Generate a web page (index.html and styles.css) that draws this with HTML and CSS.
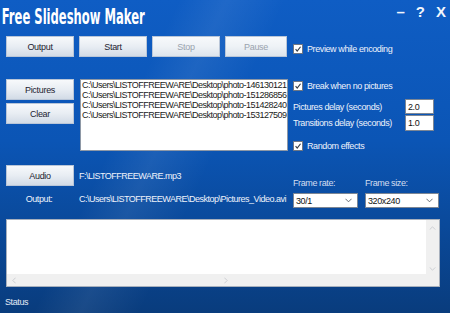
FILE: index.html
```html
<!DOCTYPE html>
<html lang="en">
<head>
    <meta charset="UTF-8">
    <title>Free Slideshow Maker</title>
    <link rel="stylesheet" href="styles.css">
</head>
<body>

    <div class="window">

        <!-- Title bar -->
        <div class="titlebar">
            <div class="app-title">Free Slideshow Maker</div>
            <div class="win-controls">
                <span>&ndash;</span>
                <span>?</span>
                <span>X</span>
            </div>
        </div>

        <div class="main">
            <!-- Encoding buttons -->
            <div class="toolbar">
                <button class="btn">Output</button>
                <button class="btn">Start</button>
                <button class="btn" disabled>Stop</button>
                <button class="btn btn-short" disabled>Pause</button>
            </div>
            <div class="opts-top">
                <label class="check"><span class="box"><svg viewBox="0 0 10 10"><path d="M2 5.2 L4 7.5 L8.2 2.2" /></svg></span>Preview while encoding</label>
            </div>

            <!-- Pictures -->
            <div class="pictures">
                <div class="btn-col">
                    <button class="btn">Pictures</button>
                    <button class="btn">Clear</button>
                </div>
                <div class="listbox">
                    <div>C:\Users\LISTOFFREEWARE\Desktop\photo-146130121</div>
                    <div>C:\Users\LISTOFFREEWARE\Desktop\photo-151286856</div>
                    <div>C:\Users\LISTOFFREEWARE\Desktop\photo-151428240</div>
                    <div>C:\Users\LISTOFFREEWARE\Desktop\photo-153127509</div>
                </div>
            </div>
            <div class="opts-mid">
                <label class="check"><span class="box"><svg viewBox="0 0 10 10"><path d="M2 5.2 L4 7.5 L8.2 2.2" /></svg></span>Break when no pictures</label>
                <div class="delays">
                    <div class="delay-row"><span>Pictures delay (seconds)</span><div class="field">2.0</div></div>
                    <div class="delay-row"><span>Transitions delay (seconds)</span><div class="field">1.0</div></div>
                </div>
                <label class="check"><span class="box"><svg viewBox="0 0 10 10"><path d="M2 5.2 L4 7.5 L8.2 2.2" /></svg></span>Random effects</label>
            </div>

            <!-- Audio / output file -->
            <div class="media">
                <div class="media-row">
                    <button class="btn">Audio</button>
                    <span class="path">F:\LISTOFFREEWARE.mp3</span>
                </div>
                <div class="media-row">
                    <span class="media-label">Output:</span>
                    <span class="path">C:\Users\LISTOFFREEWARE\Desktop\Pictures_Video.avi</span>
                </div>
            </div>
            <div class="frame">
                <div class="frame-col rate">
                    <span class="frame-label">Frame rate:</span>
                    <div class="select">30/1<svg viewBox="0 0 8 5"><path d="M0.5 0.5 L4 4 L7.5 0.5" /></svg></div>
                </div>
                <div class="frame-col size">
                    <span class="frame-label">Frame size:</span>
                    <div class="select">320x240<svg viewBox="0 0 8 5"><path d="M0.5 0.5 L4 4 L7.5 0.5" /></svg></div>
                </div>
            </div>
        </div>

        <!-- Log -->
        <div class="log">
            <div class="log-body">
                <div class="log-text"></div>
                <div class="vscroll">
                    <svg viewBox="0 0 8 5"><path d="M0.5 4.5 L4 1 L7.5 4.5" /></svg>
                    <svg viewBox="0 0 8 5"><path d="M0.5 0.5 L4 4 L7.5 0.5" /></svg>
                </div>
            </div>
            <div class="hscroll">
                <svg viewBox="0 0 5 8"><path d="M4.5 0.5 L1 4 L4.5 7.5" /></svg>
                <svg viewBox="0 0 5 8"><path d="M0.5 0.5 L4 4 L0.5 7.5" /></svg>
                <span class="corner"></span>
            </div>
        </div>

        <div class="status">Status</div>
    </div>

</body>
</html>
```

FILE: styles.css
```css
/* Base */
body {
    margin: 0;
    padding: 0;
    font-family: "Liberation Sans", Arial, sans-serif;
    font-size: 9px;
    letter-spacing: -0.4px;
    color: #eef3fb;
}

.window {
    width: 450px;
    height: 313px;
    overflow: hidden;
    box-sizing: border-box;
    background:
        linear-gradient(115deg, rgba(255, 255, 255, 0) 0%, rgba(255, 255, 255, 0) 30%, rgba(255, 255, 255, 0.07) 38%, rgba(255, 255, 255, 0) 48%),
        linear-gradient(180deg, #0f5dc4 0%, #0b55b5 45%, #0a4a9c 70%, #093c7d 100%);
}

/* Title bar */
.titlebar {
    height: 36px;
    display: flex;
    justify-content: space-between;
    align-items: flex-start;
}

.app-title {
    font-family: "DejaVu Sans Condensed", "Liberation Sans", sans-serif;
    font-weight: bold;
    font-size: 22px;
    letter-spacing: 0;
    color: #ffffff;
    padding: 4px 0 0 3px;
    transform: scaleX(0.585);
    transform-origin: left center;
    white-space: nowrap;
}

.win-controls {
    display: flex;
    gap: 11px;
    padding: 3px 4px 0 0;
    font-family: "Liberation Sans", sans-serif;
    font-weight: bold;
    font-size: 15px;
    letter-spacing: 0;
    color: #f2f6fc;
}

/* Main grid */
.main {
    display: grid;
    grid-template-columns: 282px 147px;
    column-gap: 5px;
    padding-left: 6px;
}

.main > .pictures,
.main > .opts-mid {
    margin-top: 22px;
}

.main > .media,
.main > .frame {
    margin-top: 13px;
}

/* Buttons */
.btn {
    box-sizing: border-box;
    width: 68px;
    height: 21px;
    padding: 0;
    border: 1px solid #b9c6d8;
    background: linear-gradient(180deg, #f7f9fb 0%, #e8edf3 50%, #d2dbe6 100%);
    font-family: inherit;
    font-size: 9px;
    letter-spacing: -0.3px;
    color: #1c2230;
    cursor: pointer;
}

.btn:disabled {
    color: #9aa3ae;
    background: linear-gradient(180deg, #f7f9fb 0%, #eef2f6 50%, #dde4ec 100%);
}

.btn-short {
    width: 62px;
}

.toolbar {
    display: flex;
    gap: 5px;
    height: 21px;
}

/* Checkboxes */
.check {
    display: flex;
    align-items: center;
    gap: 4px;
    height: 12px;
}

.box {
    box-sizing: border-box;
    width: 10px;
    height: 10px;
    background: #ffffff;
    border: 1px solid #6d7684;
    display: flex;
}

.box svg {
    width: 8px;
    height: 8px;
    fill: none;
    stroke: #333a44;
    stroke-width: 1.4;
}

.opts-top {
    padding-top: 7px;
}

/* Pictures list */
.pictures {
    display: flex;
    gap: 6px;
}

.btn-col {
    display: flex;
    flex-direction: column;
    gap: 3px;
}

.listbox {
    box-sizing: border-box;
    width: 208px;
    height: 72px;
    background: #ffffff;
    border: 1px solid #8e98a6;
    color: #1a1a1a;
    padding: 0 0 0 1px;
    line-height: 10px;
    letter-spacing: -0.5px;
    white-space: nowrap;
    overflow: hidden;
}

.opts-mid {
    display: flex;
    flex-direction: column;
    padding-top: 1px;
}

.delays {
    display: flex;
    flex-direction: column;
    gap: 1px;
    margin: 7px 0 9px 0;
}

.delay-row {
    display: flex;
    justify-content: space-between;
    align-items: center;
    padding-right: 6px;
}

.delay-row:last-child .field {
    height: 16px;
}

.field {
    box-sizing: border-box;
    width: 29px;
    height: 15px;
    background: #ffffff;
    border: 1px solid #7c8694;
    color: #111111;
    padding: 1px 0 0 2px;
    line-height: 12px;
}

/* Audio & output */
.media {
    display: flex;
    flex-direction: column;
    gap: 8px;
    overflow: hidden;
}

.media-row {
    display: flex;
    align-items: center;
    gap: 5px;
}

.media-label {
    flex-shrink: 0;
    width: 68px;
    text-align: center;
    padding-right: 2px;
    box-sizing: border-box;
}

.path {
    white-space: nowrap;
    letter-spacing: -0.5px;
}

/* Frame options */
.frame {
    display: flex;
    gap: 7px;
}

.frame-col {
    display: flex;
    flex-direction: column;
    padding-top: 12px;
    gap: 4px;
}

.frame-label {
    color: #d4def0;
    line-height: 12px;
}

.rate .select {
    width: 65px;
}

.size .select {
    width: 74px;
}

.select {
    box-sizing: border-box;
    height: 15px;
    background: #ffffff;
    border: 1px solid #7c8694;
    color: #111111;
    display: flex;
    justify-content: space-between;
    align-items: center;
    padding: 0 5px 0 2px;
}

.select svg {
    width: 7px;
    height: 5px;
    fill: none;
    stroke: #555c66;
    stroke-width: 1;
}

/* Log */
.log {
    box-sizing: border-box;
    width: 434px;
    height: 68px;
    margin: 11px 0 0 6px;
    border: 1px solid #a7b0bd;
    background: #f0f0f0;
    display: flex;
    flex-direction: column;
}

.log-body {
    flex: 1;
    display: flex;
}

.log-text {
    flex: 1;
    background: #ffffff;
}

.vscroll {
    width: 13px;
    display: flex;
    flex-direction: column;
    justify-content: space-between;
    align-items: center;
    padding: 6px 0 3px 0;
}

.vscroll svg,
.hscroll svg {
    fill: none;
    stroke: #c4c7cc;
    stroke-width: 1;
}

.vscroll svg {
    width: 7px;
    height: 4px;
}

.hscroll {
    height: 12px;
    display: flex;
    align-items: center;
    justify-content: space-between;
    padding-left: 5px;
}

.hscroll svg {
    width: 4px;
    height: 7px;
}

.hscroll .corner {
    width: 14px;
    margin-left: -10px;
}

.status {
    padding: 10px 0 0 5px;
    color: #e3eaf5;
}
```
